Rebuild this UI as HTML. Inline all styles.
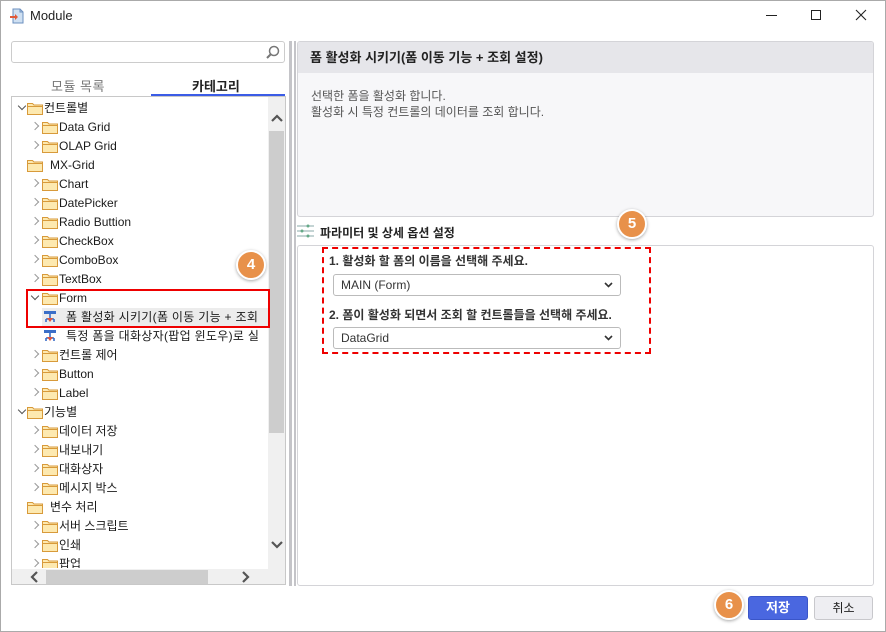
<!DOCTYPE html>
<html><head><meta charset="utf-8"><style>
*{margin:0;padding:0;box-sizing:border-box}
body{width:886px;height:632px;background:#fff;font-family:"Liberation Sans","Noto Sans CJK KR",sans-serif;font-size:12px;color:#222;position:relative;overflow:hidden}
.win{position:absolute;left:0;top:0;width:886px;height:632px;border:1px solid #aaa}
.abs{position:absolute}
.row{position:absolute;height:19px;line-height:19px;white-space:nowrap;font-size:12px;color:#1a1a1a}
.fold{position:absolute;width:16px;height:13px;top:4px}
.badge{position:absolute;width:30px;height:30px;border-radius:50%;background:#e8914a;border:2px solid #fff;box-shadow:0 1px 3px rgba(0,0,0,.35);color:#fff;font-weight:bold;font-size:15px;text-align:center;line-height:26px}
.sel{position:absolute;height:22px;border:1px solid #bbb;border-radius:3px;background:#fff;font-size:12px;line-height:20px;padding-left:7px;color:#333}
.ar{position:absolute;width:6px;height:6px;border-right:1.3px solid #999;border-bottom:1.3px solid #999}
.ar.r{transform:rotate(-45deg)}.ar.d{transform:rotate(45deg);border-color:#555}
#t{position:absolute;left:0;top:1px;width:886px;height:600px}
</style></head><body>
<div class="win"></div>
<svg class="abs" style="left:9px;top:8px" width="16" height="16"><path d="M4 1h7l3 3v11H4z" fill="#cfe0f2" stroke="#6b8fbf"/><path d="M11 1v3h3" fill="none" stroke="#6b8fbf"/><path d="M1 9h7" stroke="#e05a3a" stroke-width="2"/><path d="M6 6l3 3-3 3" fill="#e05a3a"/></svg>
<div class="abs" style="left:30px;top:8px;font-size:13px">Module</div>
<div class="abs" style="left:766px;top:15px;width:11px;height:1px;background:#222"></div>
<div class="abs" style="left:811px;top:10px;width:10px;height:10px;border:1px solid #222"></div>
<svg class="abs" style="left:855px;top:9px" width="12" height="12"><path d="M1 1l10 10M11 1L1 11" stroke="#222" stroke-width="1.1"/></svg>

<div class="abs" style="left:11px;top:41px;width:274px;height:22px;border:1px solid #ccc;border-radius:3px"></div>
<svg class="abs" style="left:265px;top:45px" width="15" height="15"><circle cx="9" cy="6" r="4.5" fill="none" stroke="#777" stroke-width="1.5"/><path d="M6 9l-4 4" stroke="#777" stroke-width="2"/></svg>
<div class="abs" style="left:51px;top:76px;font-size:13px;color:#777;letter-spacing:0.5px">모듈 목록</div>
<div class="abs" style="left:192px;top:76px;font-size:13px;font-weight:bold;color:#222">카테고리</div>
<div class="abs" style="left:151px;top:94px;width:134px;height:3px;background:#3b5ce6"></div>

<div class="abs" style="left:11px;top:96px;width:275px;height:489px;border:1px solid #c8c8c8;overflow:hidden">
<div class="abs" style="left:256px;top:0;width:17px;height:472px;background:#f0f0f0"></div>
<div class="abs" style="left:257px;top:34px;width:15px;height:302px;background:#cdcdcd"></div>
<svg class="abs" style="left:258px;top:16px" width="14" height="10"><path d="M2 8l5-5 5 5" fill="none" stroke="#555" stroke-width="2.2"/></svg>
<svg class="abs" style="left:258px;top:443px" width="14" height="10"><path d="M2 2l5 5 5-5" fill="none" stroke="#555" stroke-width="2.2"/></svg>
<div class="abs" style="left:0;top:472px;width:273px;height:16px;background:#f0f0f0"></div>
<div class="abs" style="left:34px;top:473px;width:162px;height:14px;background:#cdcdcd"></div>
<svg class="abs" style="left:16px;top:474px" width="12" height="12"><path d="M9 1L4 6l5 5" fill="none" stroke="#555" stroke-width="2.2"/></svg>
<svg class="abs" style="left:228px;top:474px" width="12" height="12"><path d="M3 1l5 5-5 5" fill="none" stroke="#555" stroke-width="2.2"/></svg>
</div>

<svg width="0" height="0" style="position:absolute"><defs><symbol id="f" viewBox="0 0 16 13"><path d="M0.5 1.5h5l1.5 1.5h8.5v9.5H0.5z" fill="#fde9b0" stroke="#d89a3a"/><path d="M0.5 4.5h15" stroke="#d89a3a"/></symbol>
<symbol id="m" viewBox="0 0 14 14"><rect x="1" y="1" width="12" height="3" fill="#3a6ec8"/><path d="M7 4v5M3 9v3M11 9v3M3 9h8" stroke="#3a6ec8" stroke-width="1.6" fill="none"/><path d="M4 8l3 4 3-4z" fill="#e0553a"/></symbol></defs></svg>

<div id="t">
<div class="ar d" style="left:19px;top:102px"></div><svg class="fold" style="left:27px;top:101px"><use href="#f"/></svg><div class="row" style="left:44px;top:98px">컨트롤별</div>
<div class="ar r" style="left:32px;top:122px"></div><svg class="fold" style="left:42px;top:120px"><use href="#f"/></svg><div class="row" style="left:59px;top:117px">Data Grid</div>
<div class="ar r" style="left:32px;top:141px"></div><svg class="fold" style="left:42px;top:139px"><use href="#f"/></svg><div class="row" style="left:59px;top:136px">OLAP Grid</div>
<svg class="fold" style="left:27px;top:158px"><use href="#f"/></svg><div class="row" style="left:50px;top:155px">MX-Grid</div>
<div class="ar r" style="left:32px;top:179px"></div><svg class="fold" style="left:42px;top:177px"><use href="#f"/></svg><div class="row" style="left:59px;top:174px">Chart</div>
<div class="ar r" style="left:32px;top:198px"></div><svg class="fold" style="left:42px;top:196px"><use href="#f"/></svg><div class="row" style="left:59px;top:193px">DatePicker</div>
<div class="ar r" style="left:32px;top:217px"></div><svg class="fold" style="left:42px;top:215px"><use href="#f"/></svg><div class="row" style="left:59px;top:212px">Radio Buttion</div>
<div class="ar r" style="left:32px;top:236px"></div><svg class="fold" style="left:42px;top:234px"><use href="#f"/></svg><div class="row" style="left:59px;top:231px">CheckBox</div>
<div class="ar r" style="left:32px;top:255px"></div><svg class="fold" style="left:42px;top:253px"><use href="#f"/></svg><div class="row" style="left:59px;top:250px">ComboBox</div>
<div class="ar r" style="left:32px;top:274px"></div><svg class="fold" style="left:42px;top:272px"><use href="#f"/></svg><div class="row" style="left:59px;top:269px">TextBox</div>
<div class="ar d" style="left:32px;top:292px"></div><svg class="fold" style="left:42px;top:291px"><use href="#f"/></svg><div class="row" style="left:59px;top:288px">Form</div>
<div class="abs" style="left:42px;top:307px;width:226px;height:19px;background:#ececec"></div>
<svg class="abs" style="left:43px;top:309px" width="14" height="14"><use href="#m"/></svg><div class="row" style="left:66px;top:307px;letter-spacing:.3px">폼 활성화 시키기(폼 이동 기능 + 조회</div>
<svg class="abs" style="left:43px;top:328px" width="14" height="14"><use href="#m"/></svg><div class="row" style="left:66px;top:326px;letter-spacing:.3px">특정 폼을 대화상자(팝업 윈도우)로 실</div>
<div class="abs" style="left:26px;top:288px;width:244px;height:39px;border:2px solid #e00"></div>
<div class="ar r" style="left:32px;top:350px"></div><svg class="fold" style="left:42px;top:348px"><use href="#f"/></svg><div class="row" style="left:59px;top:345px">컨트롤 제어</div>
<div class="ar r" style="left:32px;top:369px"></div><svg class="fold" style="left:42px;top:367px"><use href="#f"/></svg><div class="row" style="left:59px;top:364px">Button</div>
<div class="ar r" style="left:32px;top:388px"></div><svg class="fold" style="left:42px;top:386px"><use href="#f"/></svg><div class="row" style="left:59px;top:383px">Label</div>
<div class="ar d" style="left:19px;top:406px"></div><svg class="fold" style="left:27px;top:405px"><use href="#f"/></svg><div class="row" style="left:44px;top:402px">기능별</div>
<div class="ar r" style="left:32px;top:426px"></div><svg class="fold" style="left:42px;top:424px"><use href="#f"/></svg><div class="row" style="left:59px;top:421px">데이터 저장</div>
<div class="ar r" style="left:32px;top:445px"></div><svg class="fold" style="left:42px;top:443px"><use href="#f"/></svg><div class="row" style="left:59px;top:440px">내보내기</div>
<div class="ar r" style="left:32px;top:464px"></div><svg class="fold" style="left:42px;top:462px"><use href="#f"/></svg><div class="row" style="left:59px;top:459px">대화상자</div>
<div class="ar r" style="left:32px;top:483px"></div><svg class="fold" style="left:42px;top:481px"><use href="#f"/></svg><div class="row" style="left:59px;top:478px">메시지 박스</div>
<svg class="fold" style="left:27px;top:500px"><use href="#f"/></svg><div class="row" style="left:50px;top:497px">변수 처리</div>
<div class="ar r" style="left:32px;top:521px"></div><svg class="fold" style="left:42px;top:519px"><use href="#f"/></svg><div class="row" style="left:59px;top:516px">서버 스크립트</div>
<div class="ar r" style="left:32px;top:540px"></div><svg class="fold" style="left:42px;top:538px"><use href="#f"/></svg><div class="row" style="left:59px;top:535px">인쇄</div>
<div style="position:absolute;left:12px;top:554px;width:256px;height:13px;overflow:hidden"><div class="ar r" style="left:20px;top:5px"></div><svg class="fold" style="left:30px;top:3px"><use href="#f"/></svg><div class="row" style="left:47px;top:0px">팝업</div></div>
</div>

<div class="badge" style="left:236px;top:250px">4</div>

<div class="abs" style="left:289px;top:41px;width:3px;height:545px;background:#c4c4c8"></div>
<div class="abs" style="left:294px;top:41px;width:2px;height:545px;background:#c4c4c8"></div>

<div class="abs" style="left:297px;top:41px;width:577px;height:176px;border:1px solid #d4d4d8;border-radius:3px;background:#f7f7f9;overflow:hidden">
<div style="height:31px;background:#e6e6ea;font-weight:bold;font-size:13px;line-height:31px;padding-left:12px">폼 활성화 시키기(폼 이동 기능 + 조회 설정)</div>
<div style="padding:15px 0 0 13px;color:#555;line-height:16px">선택한 폼을 활성화 합니다.<br>활성화 시 특정 컨트롤의 데이터를 조회 합니다.</div>
</div>
<svg class="abs" style="left:297px;top:224px" width="18" height="14"><path d="M0 2h17M0 7h17M0 12h17" stroke="#8aa" stroke-width="1"/><circle cx="11" cy="2" r="1.5" fill="#6a8"/><circle cx="5" cy="7" r="1.5" fill="#6a8"/><circle cx="11" cy="12" r="1.5" fill="#6a8"/></svg>
<div class="abs" style="left:320px;top:224px;font-weight:bold;font-size:12px">파라미터 및 상세 옵션 설정</div>
<div class="abs" style="left:297px;top:245px;width:577px;height:341px;border:1px solid #d4d4d8;border-radius:3px"></div>
<div class="abs" style="left:322px;top:247px;width:329px;height:107px;border:2px dashed #e00"></div>
<div class="abs" style="left:329px;top:252px;font-weight:bold;color:#333">1. 활성화 할 폼의 이름을 선택해 주세요.</div>
<div class="sel" style="left:333px;top:274px;width:288px">MAIN (Form)</div>
<div class="abs" style="left:329px;top:306px;font-weight:bold;color:#333">2. 폼이 활성화 되면서 조회 할 컨트롤들을 선택해 주세요.</div>
<div class="sel" style="left:333px;top:327px;width:288px">DataGrid</div>
<svg class="abs" style="left:604px;top:282px" width="9" height="6"><path d="M1 1l3.5 3.5L8 1" fill="none" stroke="#333" stroke-width="1.6"/></svg>
<svg class="abs" style="left:604px;top:335px" width="9" height="6"><path d="M1 1l3.5 3.5L8 1" fill="none" stroke="#333" stroke-width="1.6"/></svg>
<div class="badge" style="left:617px;top:209px">5</div>

<div class="abs" style="left:748px;top:596px;width:60px;height:24px;background:#4a67e0;border:1px solid #3a55c8;border-radius:3px;color:#fff;font-weight:bold;text-align:center;line-height:22px;font-size:13px">저장</div>
<div class="abs" style="left:814px;top:596px;width:59px;height:24px;background:#eeeef2;border:1px solid #c8c8cc;border-radius:3px;text-align:center;line-height:22px;font-size:12px">취소</div>
<div class="badge" style="left:714px;top:590px">6</div>
</body></html>
